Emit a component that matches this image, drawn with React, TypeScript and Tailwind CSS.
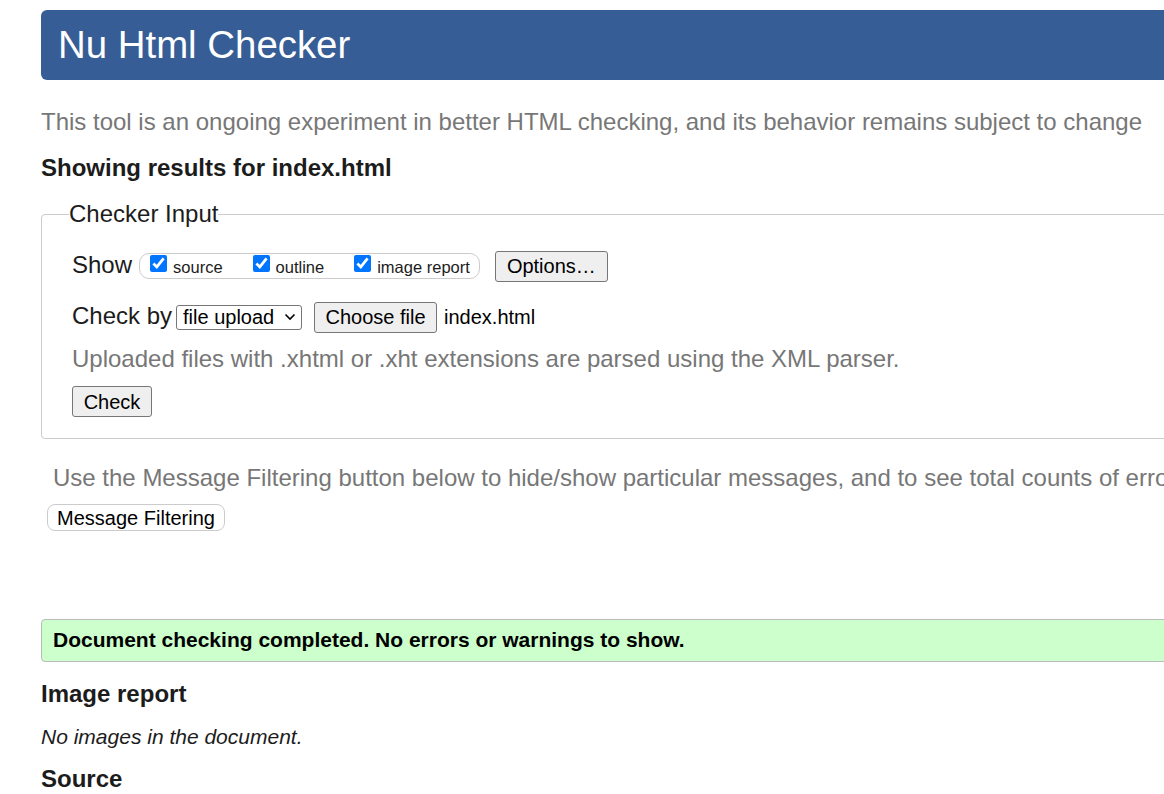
import React from "react";

const font = { fontFamily: '"Liberation Sans", Arial, sans-serif' };

function Box({ label }: { label: string }) {
  return (
    <label className="flex items-start">
      <input
        type="checkbox"
        defaultChecked
        className="w-[17px] h-[17px] m-0 mt-[1px] accent-[#0075ff]"
      />
      <span className="ml-[6px] mt-[3px] text-[16.5px] leading-[20px]">{label}</span>
    </label>
  );
}

function Btn({ children, className = "" }: { children: React.ReactNode; className?: string }) {
  return (
    <button
      className={
        "h-[31px] bg-[#efefef] border border-[#767676] rounded-[3px] text-[20px] leading-none text-black " +
        className
      }
    >
      {children}
    </button>
  );
}

export default function App() {
  return (
    <div className="w-[1164px] h-[794px] overflow-hidden bg-white text-[#1c1c1c]" style={font}>
      <div className="w-[1300px] pl-[41px]">
        {/* title bar */}
        <div className="mt-[10px] h-[70px] bg-[#365d95] rounded-[6px] flex items-center pl-[17px]">
          <h1 className="text-[38.4px] text-white leading-none">Nu Html Checker</h1>
        </div>

        <p className="mt-[28px] text-[24px] leading-[28px] text-[#777] whitespace-nowrap">
          This tool is an ongoing experiment in better HTML checking, and its behavior remains subject to change
        </p>

        <h2 className="mt-[18px] text-[24px] leading-[28px] font-bold">Showing results for index.html</h2>

        <fieldset className="mt-[18px] border border-[#ccc] rounded-[4px] pl-[30px] pb-[21px]">
          <legend className="text-[24px] leading-[28px] -ml-[3px]">Checker Input</legend>

          <div className="mt-[22px] h-[32px] flex items-center">
            <span className="text-[24px] leading-[28px] -mt-[2px]">Show</span>
            <div className="ml-[7px] h-[26px] border border-[#ccc] rounded-[10px] flex items-start pl-[10px] pr-[9px] gap-[30px]">
              <Box label="source" />
              <Box label="outline" />
              <Box label="image report" />
            </div>
            <Btn className="ml-[15px] w-[113px]">Options…</Btn>
          </div>

          <div className="mt-[19px] h-[32px] flex items-center">
            <span className="text-[24px] leading-[28px] -mt-[2px]">Check by</span>
            <div className="ml-[4px] w-[126px] h-[25px] border border-[#767676] rounded-[3px] flex items-center pl-[6px] pr-[5px] justify-between text-[20px] text-black">
              <span>file upload</span>
              <svg width="12" height="8" viewBox="0 0 12 8" fill="none">
                <path d="M1.5 1.5l4.5 4.5 4.5-4.5" stroke="#000" strokeWidth="1.6" />
              </svg>
            </div>
            <Btn className="ml-[12px] w-[123px]">Choose file</Btn>
            <span className="ml-[7px] text-[20px] text-black">index.html</span>
          </div>

          <p className="mt-[12px] text-[24px] leading-[28px] text-[#777]">
            Uploaded files with .xhtml or .xht extensions are parsed using the XML parser.
          </p>

          <Btn className="mt-[13px] w-[80px]">Check</Btn>
        </fieldset>

        <p className="mt-[25px] ml-[12px] text-[24px] leading-[28px] text-[#777] whitespace-nowrap">
          Use the Message Filtering button below to hide/show particular messages, and to see total counts of errors and warnings.
        </p>

        <button className="mt-[12px] ml-[6px] w-[178px] h-[27px] bg-white border border-[#ccc] rounded-[8px] text-[20px] leading-none text-black">
          Message Filtering
        </button>

        <div className="mt-[87px] h-[43px] bg-[#ccffcc] border border-[#bbb] rounded-[4px] flex items-center pl-[11px]">
          <span className="text-[21px] font-bold text-black">
            Document checking completed. No errors or warnings to show.
          </span>
        </div>

        <h2 className="mt-[18px] text-[24px] leading-[28px] font-bold">Image report</h2>
        <p className="mt-[17px] text-[21px] leading-[24px] italic">No images in the document.</p>
        <h2 className="mt-[16px] text-[24px] leading-[28px] font-bold">Source</h2>
      </div>
    </div>
  );
}
